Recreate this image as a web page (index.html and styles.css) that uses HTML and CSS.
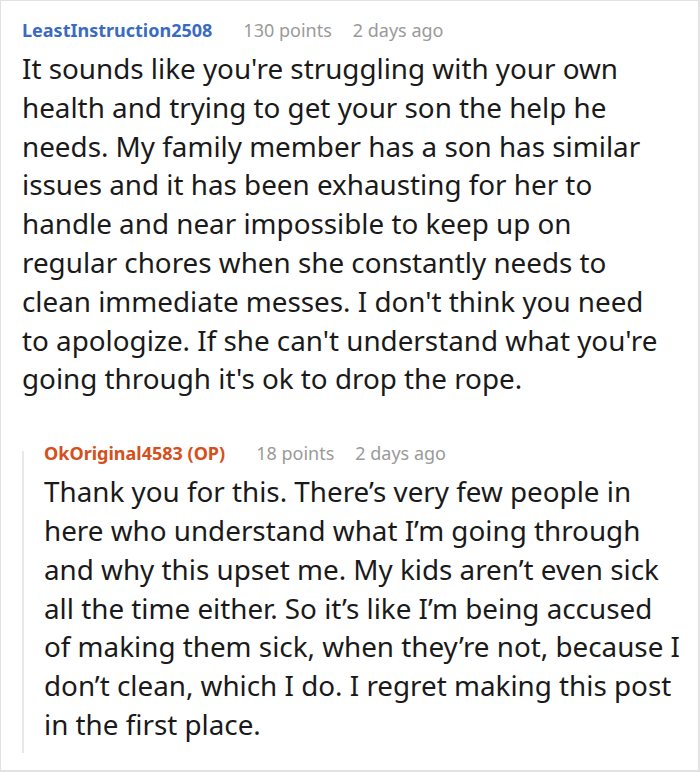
FILE: index.html
```html
<!DOCTYPE html>
<html>
<head>
<meta charset="utf-8">
<link rel="stylesheet" href="styles.css">
</head>
<body>
<div class="card">
  <div class="comment">
    <div class="meta">
      <span class="author">LeastInstruction2508</span>
      <span class="info">130 points</span>
      <span class="info">2 days ago</span>
    </div>
    <p class="text">It sounds like you're struggling with your own<br>health and trying to get your son the help he<br>needs. My family member has a son has similar<br>issues and it has been exhausting for her to<br>handle and near impossible to keep up on<br>regular chores when she constantly needs to<br>clean immediate messes. I don't think you need<br>to apologize. If she can't understand what you're<br>going through it's ok to drop the rope.</p>
    <div class="reply">
      <div class="rail"></div>
      <div class="reply-body">
        <div class="meta">
          <span class="author op">OkOriginal4583 (OP)</span>
          <span class="info">18 points</span>
          <span class="info">2 days ago</span>
        </div>
        <p class="text">Thank you for this. There’s very few people in<br>here who understand what I’m going through<br>and why this upset me. My kids aren’t even sick<br>all the time either. So it’s like I’m being accused<br>of making them sick, when they’re not, because I<br>don’t clean, which I do. I regret making this post<br>in the first place.</p>
      </div>
    </div>
  </div>
</div>
</body>
</html>
```
FILE: styles.css
```css
html, body {
  margin: 0;
  padding: 0;
  background: #fff;
}
.card {
  box-sizing: border-box;
  width: 700px;
  height: 772px;
  border: 1px solid #e2e2e2;
  border-right-width: 2px;
  border-bottom-width: 2px;
  padding: 16px 20px 0 21px;
  font-family: "Noto Sans", "Open Sans", sans-serif;
  color: #1a1a1a;
}
.meta {
  display: flex;
  gap: 21px;
  align-items: baseline;
  font-size: 18px;
  line-height: 26px;
}
.author {
  font-weight: 700;
  color: #3a6bbf;
  margin-right: 10px;
}
.author.op {
  color: #d4501d;
}
.info {
  color: #9a9a9a;
}
.text {
  margin: 6px 0 0 0;
  font-size: 27.8px;
  line-height: 38.8px;
  color: #1a1a1a;
  white-space: nowrap;
}
.reply {
  display: flex;
  margin-top: 42px;
}
.rail {
  flex: 0 0 2px;
  background: #e8e8e8;
  margin-top: 11px;
  margin-bottom: -9px;
}
.reply-body {
  flex: 1;
  padding-left: 20px;
}
```
